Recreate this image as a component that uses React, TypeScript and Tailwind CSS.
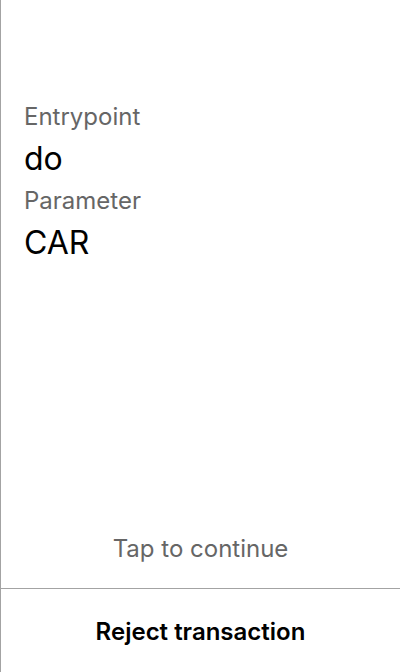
export default function App() {
  return (
    <div
      className="flex h-[672px] w-[400px] flex-col border-l border-[#a3a3a3] bg-white"
      style={{ fontFamily: 'Inter, "Noto Sans", sans-serif' }}
    >
      {/* Details */}
      <div className="flex-1 pl-[23px] pr-6 pt-[101px]">
        <div className="text-[24px] leading-[32px] text-[#666666]">Entrypoint</div>
        <div className="text-[32px] leading-[52px] text-black">do</div>
        <div className="text-[24px] leading-[32px] text-[#666666]">Parameter</div>
        <div className="text-[32px] leading-[52px] text-black">CAR</div>
      </div>

      <div className="pb-[23px] text-center text-[24px] leading-[32px] text-[#666666]">
        Tap to continue
      </div>

      {/* Footer */}
      <button className="h-[84px] w-full border-t border-[#a3a3a3] pt-[2px] text-[24px] font-semibold text-black">
        Reject transaction
      </button>
    </div>
  );
}
